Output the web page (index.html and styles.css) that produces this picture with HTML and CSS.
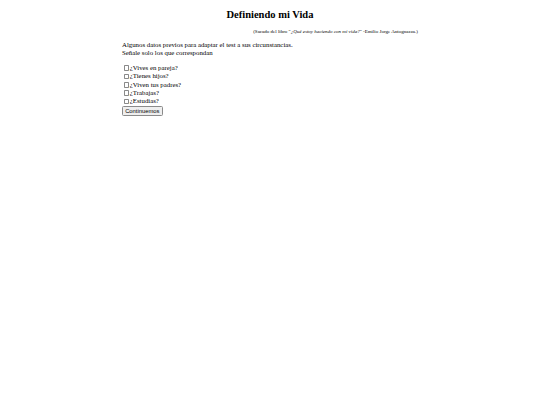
FILE: index.html
```
<!DOCTYPE html>
<html lang="es">
<head>
<meta charset="utf-8">
<title>Definiendo mi Vida</title>
<link rel="stylesheet" href="styles.css">
</head>
<body>
<div class="page">
  <h1 class="title">Definiendo mi Vida</h1>
  <p class="source">(Sacado del libro "<em>¿Qué estoy haciendo con mi vida?</em>" -Emilio Jorge Antognazza.)</p>
  <p class="intro">Algunos datos previos para adaptar el test a sus circunstancias.<br>Señale solo los que correspondan</p>
  <form class="form">
    <label class="opt"><input type="checkbox" class="chk">¿Vives en pareja?</label>
    <label class="opt"><input type="checkbox" class="chk">¿Tienes hijos?</label>
    <label class="opt"><input type="checkbox" class="chk">¿Viven tus padres?</label>
    <label class="opt"><input type="checkbox" class="chk">¿Trabajas?</label>
    <label class="opt"><input type="checkbox" class="chk">¿Estudias?</label>
    <button type="button" class="btn">Continuemos</button>
  </form>
</div>
</body>
</html>
```
FILE: styles.css
```
html, body {
  margin: 0;
  padding: 0;
  background: #fff;
}
body {
  font-family: "Liberation Serif", "Times New Roman", serif;
  font-size: 6.8px;
  line-height: 8.3px;
  color: #000;
}
.page {
  width: 296px;
  margin: 0 auto;
}
.title {
  font-size: 10.5px;
  line-height: 13px;
  font-weight: bold;
  text-align: center;
  margin: 8px 0 0;
}
.source {
  font-size: 5px;
  line-height: 6px;
  text-align: right;
  margin: 8px 0 0;
}
.intro {
  margin: 6px 0 0;
}
.form {
  margin-top: 6.5px;
  display: flex;
  flex-direction: column;
  align-items: flex-start;
}
.opt {
  display: flex;
  align-items: center;
  height: 8.3px;
}
.chk {
  -webkit-appearance: none;
  appearance: none;
  box-sizing: border-box;
  width: 5.5px;
  height: 5.5px;
  margin: 0 0.8px 0 1.5px;
  border: 0.6px solid #8a8a8a;
  border-radius: 0.8px;
  background: #fff;
}
.btn {
  font-family: "Liberation Sans", Arial, sans-serif;
  font-size: 5.8px;
  line-height: 6px;
  padding: 1px 2.2px;
  margin-top: 0;
  border: 0.7px solid #8a8a8a;
  border-radius: 1.5px;
  background: #efefef;
  color: #000;
}
```
